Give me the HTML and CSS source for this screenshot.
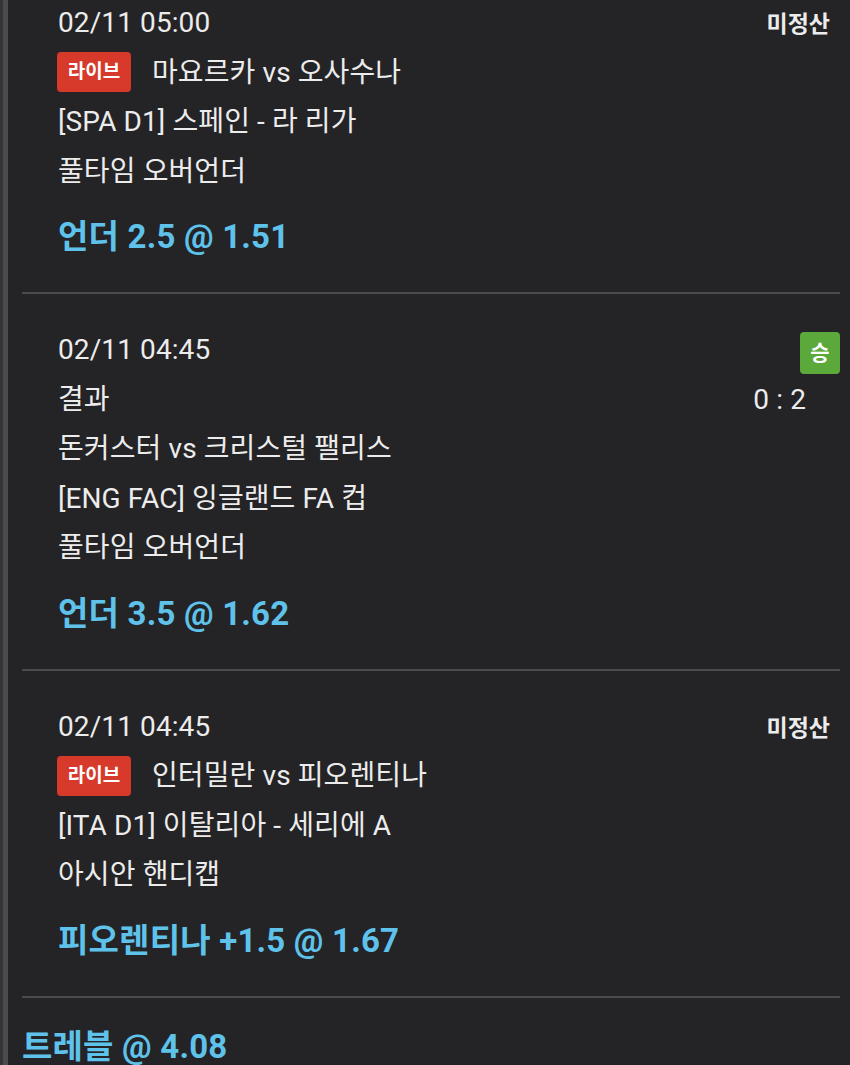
FILE: index.html
```html
<!DOCTYPE html>
<html lang="ko">
<head>
  <meta charset="UTF-8" />
  <meta name="viewport" content="width=device-width, initial-scale=1.0"/>
  <title>베팅 내역</title>
  <link rel="stylesheet" href="styles.css">
</head>
<body>
  <div class="page">
    <div class="bets">
      <div class="bet">
        <div class="line head">
          <span>02/11 05:00</span>
          <span class="status">미정산</span>
        </div>
        <div class="line"><span class="live">라이브</span>마요르카 vs 오사수나</div>
        <div class="line">[SPA D1] 스페인 - 라 리가</div>
        <div class="line">풀타임 오버언더</div>
        <div class="pick">언더 2.5 @ 1.51</div>
      </div>

      <div class="bet">
        <div class="line head">
          <span>02/11 04:45</span>
          <span class="win">승</span>
        </div>
        <div class="line head">
          <span>결과</span>
          <span class="score">0 : 2</span>
        </div>
        <div class="line">돈커스터 vs 크리스털 팰리스</div>
        <div class="line">[ENG FAC] 잉글랜드 FA 컵</div>
        <div class="line">풀타임 오버언더</div>
        <div class="pick">언더 3.5 @ 1.62</div>
      </div>

      <div class="bet">
        <div class="line head">
          <span>02/11 04:45</span>
          <span class="status">미정산</span>
        </div>
        <div class="line"><span class="live">라이브</span>인터밀란 vs 피오렌티나</div>
        <div class="line">[ITA D1] 이탈리아 - 세리에 A</div>
        <div class="line">아시안 핸디캡</div>
        <div class="pick">피오렌티나 +1.5 @ 1.67</div>
      </div>

      <div class="total">트레블 @ 4.08</div>
    </div>
  </div>
</body>
</html>
```

FILE: styles.css
```css
html, body {
  margin: 0;
  padding: 0;
  background: #242326;
  overflow: hidden;
}

body {
  font-family: Roboto, "Noto Sans CJK KR", sans-serif;
  color: #ececec;
}

.page {
  display: flow-root;
  height: 1065px;
  border-left: 3px solid #353437;
  box-shadow: inset 5px 0 0 #4c4b4e;
  padding-left: 19px;
}

.bets {
  margin-top: -33px;
  padding-right: 10px;
}

.bet {
  padding: 31px 0 30px 36px;
  border-bottom: 2px solid #4b4a4d;
}

.line {
  font-size: 28px;
  letter-spacing: 0.1px;
  line-height: 49.5px;
  height: 49.5px;
  display: flex;
  align-items: center;
}

.head {
  justify-content: space-between;
}

.status {
  font-size: 23px;
  font-weight: bold;
  letter-spacing: 0;
  margin-top: 4px;
  margin-right: 10px;
}

.live {
  display: inline-block;
  width: 74px;
  height: 40px;
  line-height: 40px;
  text-align: center;
  background: #d7392b;
  color: #fff;
  border-radius: 4px;
  font-size: 19px;
  font-weight: bold;
  letter-spacing: 0;
  margin-right: 21px;
  margin-left: -1px;
}

.win {
  width: 40px;
  height: 42px;
  line-height: 42px;
  text-align: center;
  background: #5ba83b;
  color: #fff;
  border-radius: 4px;
  font-size: 21px;
  font-weight: bold;
  letter-spacing: 0;
  margin-top: 6px;
}

.score {
  margin-right: 34px;
}

.pick, .total {
  font-size: 33px;
  font-weight: bold;
  letter-spacing: 0.2px;
  line-height: 50px;
  color: #5ec2ea;
}

.pick {
  margin-top: 16px;
}

.total {
  padding-top: 24px;
}
```
